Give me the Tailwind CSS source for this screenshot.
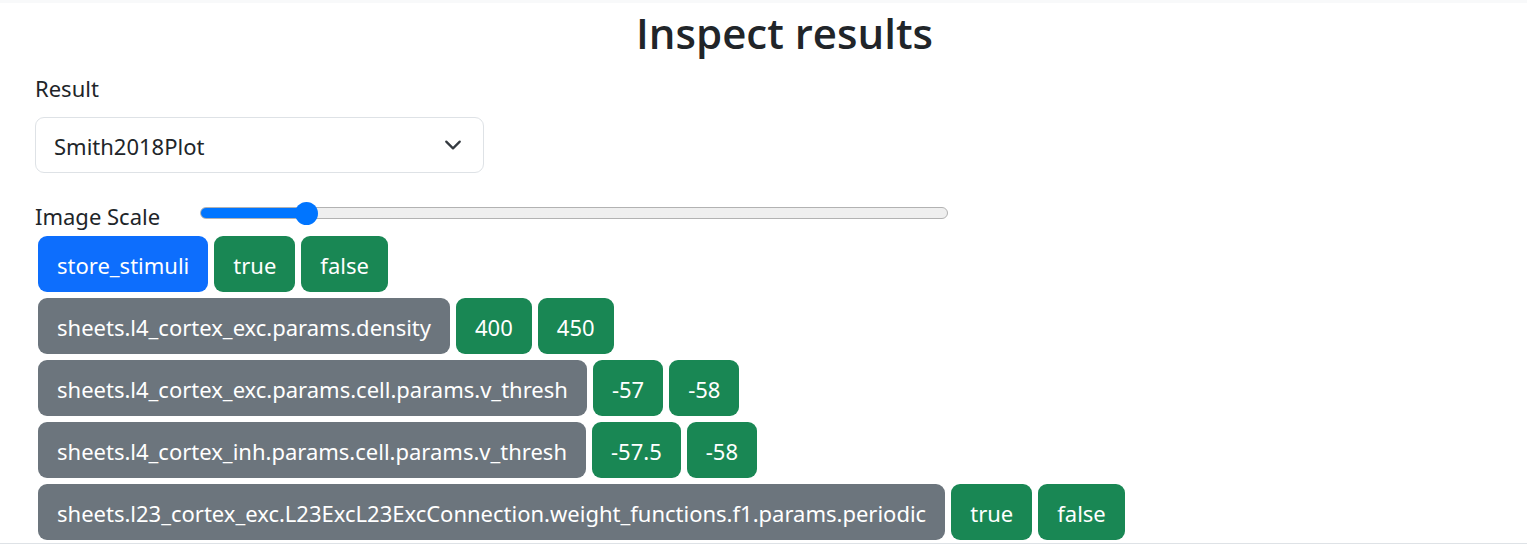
<!DOCTYPE html>
<html lang="en">
<head>
<meta charset="utf-8">
<meta name="viewport" content="width=device-width, initial-scale=1">
<title>Inspect results</title>
<script src="https://cdn.jsdelivr.net/npm/@tailwindcss/browser@4"></script>
</head>
<body class="bg-white font-['Segoe_UI','Noto_Sans',sans-serif] text-[22px] leading-9 text-[#212529]">
<main class="border-t-3 border-b border-t-[#f8f9fa] border-b-[#dee2e6] pb-[3px]">
  <h1 class="pl-[42px] pt-1 text-center font-['Segoe_UI','Open_Sans',sans-serif] text-[42px] leading-[52px] font-semibold">Inspect results</h1>
  <form class="pl-[35px]">
    <div class="pt-[11px]">
      <label for="result" class="block">Result</label>
      <div class="mt-[11px] grid w-[449px] max-w-full items-center">
        <select id="result" class="col-start-1 row-start-1 h-14 w-full appearance-none rounded-[9px] border border-[#dee2e6] bg-white pl-[18px] pr-14 pt-[2px]">
          <option>Smith2018Plot</option>
        </select>
        <svg class="pointer-events-none col-start-1 row-start-1 mr-[22px] h-[18px] w-[18px] justify-self-end" viewBox="0 0 16 16" fill="none" stroke="#343a40" stroke-width="2" stroke-linecap="round" stroke-linejoin="round" aria-hidden="true"><path d="m2 5 6 6 6-6"/></svg>
      </div>
    </div>
    <div class="mt-[25px] flex pb-[2px]">
      <label for="scale" class="w-[165px] shrink-0">Image Scale</label>
      <input id="scale" type="range" min="0" max="100" value="13" class="mt-[9px] h-3 w-[748px] min-w-0 appearance-none rounded-full border border-[#b2b2b2] bg-linear-to-r from-[#0075ff] from-14% to-[#efefef] to-14% [&::-webkit-slider-thumb]:size-[23px] [&::-webkit-slider-thumb]:appearance-none [&::-webkit-slider-thumb]:rounded-full [&::-webkit-slider-thumb]:bg-[#0075ff]">
    </div>
    <div class="flex flex-col gap-[6px] pl-[3px] text-white [&_button]:h-14 [&_button]:rounded-[9px] [&_button]:px-[19px] [&_button]:pt-[2px]">
      <div class="flex gap-[6px]">
        <button type="button" class="bg-[#0d6efd]">store_stimuli</button>
        <button type="button" class="bg-[#198754]">true</button>
        <button type="button" class="bg-[#198754]">false</button>
      </div>
      <div class="flex gap-[6px]">
        <button type="button" class="bg-[#6c757d]">sheets.l4_cortex_exc.params.density</button>
        <button type="button" class="bg-[#198754]">400</button>
        <button type="button" class="bg-[#198754]">450</button>
      </div>
      <div class="flex gap-[6px]">
        <button type="button" class="bg-[#6c757d]">sheets.l4_cortex_exc.params.cell.params.v_thresh</button>
        <button type="button" class="bg-[#198754]">-57</button>
        <button type="button" class="bg-[#198754]">-58</button>
      </div>
      <div class="flex gap-[6px]">
        <button type="button" class="bg-[#6c757d]">sheets.l4_cortex_inh.params.cell.params.v_thresh</button>
        <button type="button" class="bg-[#198754]">-57.5</button>
        <button type="button" class="bg-[#198754]">-58</button>
      </div>
      <div class="flex gap-[6px]">
        <button type="button" class="bg-[#6c757d]">sheets.l23_cortex_exc.L23ExcL23ExcConnection.weight_functions.f1.params.periodic</button>
        <button type="button" class="bg-[#198754]">true</button>
        <button type="button" class="bg-[#198754]">false</button>
      </div>
    </div>
  </form>
</main>
</body>
</html>
